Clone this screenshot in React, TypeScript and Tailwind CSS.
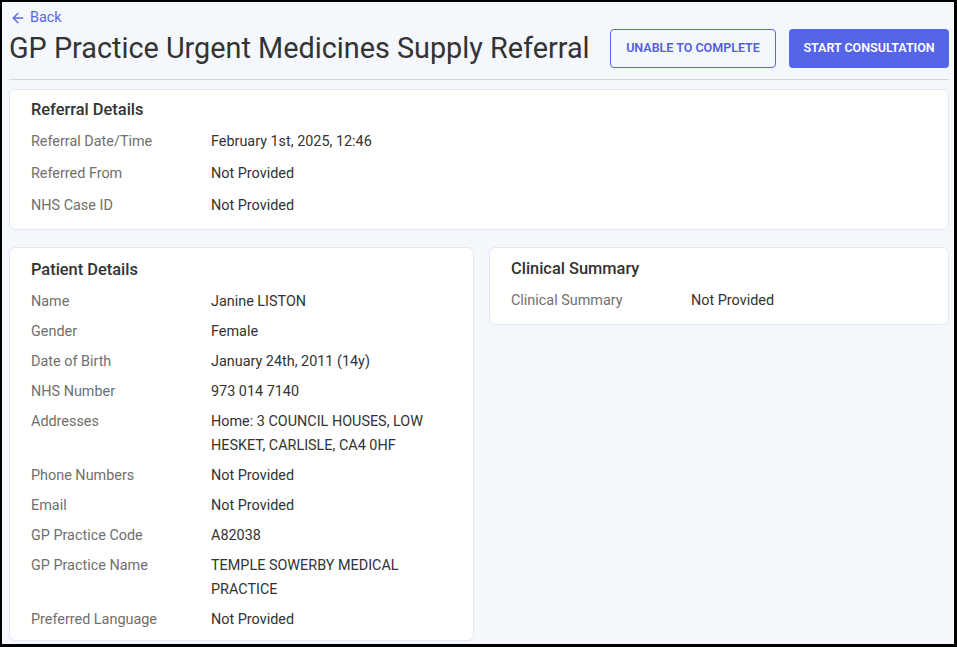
import { ArrowLeft } from "lucide-react";

type Row = { label: string; value: string };

const REFERRAL: Row[] = [
  { label: "Referral Date/Time", value: "February 1st, 2025, 12:46" },
  { label: "Referred From", value: "Not Provided" },
  { label: "NHS Case ID", value: "Not Provided" },
];

const PATIENT: Row[] = [
  { label: "Name", value: "Janine LISTON" },
  { label: "Gender", value: "Female" },
  { label: "Date of Birth", value: "January 24th, 2011 (14y)" },
  { label: "NHS Number", value: "973 014 7140" },
  { label: "Addresses", value: "Home: 3 COUNCIL HOUSES, LOW HESKET, CARLISLE, CA4 0HF" },
  { label: "Phone Numbers", value: "Not Provided" },
  { label: "Email", value: "Not Provided" },
  { label: "GP Practice Code", value: "A82038" },
  { label: "GP Practice Name", value: "TEMPLE SOWERBY MEDICAL PRACTICE" },
  { label: "Preferred Language", value: "Not Provided" },
];

function Card({ title, rows, gap, pad }: { title: string; rows: Row[]; gap: string; pad: string }) {
  return (
    <div className={`rounded-md border border-[#e3e8f0] bg-white px-[21px] ${pad}`}>
      <h2 className="text-[16.4px] leading-6 font-medium text-[#333333]">{title}</h2>
      <div className={`mt-2 flex flex-col ${gap}`}>
        {rows.map((r) => (
          <div key={r.label} className="flex text-[14.4px] leading-6">
            <div className="w-[180px] shrink-0 text-[#6f6f6f]">{r.label}</div>
            <div className="text-[#333333]">{r.value}</div>
          </div>
        ))}
      </div>
    </div>
  );
}

export default function App() {
  return (
    <div
      className="h-[647px] overflow-hidden border-l-2 border-t-2 border-r-[3px] border-b-[3px] border-black bg-[#f4f7fc] pl-[7px] pr-[5px]"
      style={{ fontFamily: "Roboto, 'Liberation Sans', sans-serif" }}
    >
      {/* ── Header ── */}
      <div className="flex items-end justify-between border-b border-[#d3d8e0] pb-[10px]">
        <div>
          <a className="mt-[8px] flex items-center gap-[4px] pl-[1px] text-[14.4px] leading-4 text-[#5a66e6]" href="#">
            <ArrowLeft className="h-[16px] w-[16px]" strokeWidth={2} />
            Back
          </a>
          <h1 className="mt-[4px] mb-[3px] text-[28.8px] leading-[36px] text-[#333333]">
            GP Practice Urgent Medicines Supply Referral
          </h1>
        </div>
        <div className="flex gap-[13px] pb-[1px]">
          <button className="h-[39px] w-[166px] rounded border border-[#5a66e6] text-[12.5px] font-semibold text-[#5060e0]">
            UNABLE TO COMPLETE
          </button>
          <button className="h-[39px] w-[160px] rounded bg-[#5465e8] text-[12.5px] font-semibold text-white">
            START CONSULTATION
          </button>
        </div>
      </div>

      {/* ── Body ── */}
      <div className="mt-[9px] flex flex-col gap-[17px]">
        <Card title="Referral Details" rows={REFERRAL} gap="gap-2" pad="pt-[8px] pb-[11px]" />
        <div className="grid grid-cols-[465px_1fr] items-start gap-[15px]">
          <Card title="Patient Details" rows={PATIENT} gap="gap-[6px]" pad="pt-[10px] pb-[8px]" />
          <Card
            title="Clinical Summary"
            rows={[{ label: "Clinical Summary", value: "Not Provided" }]}
            gap="gap-2"
            pad="pt-[9px] pb-[11px]"
          />
        </div>
      </div>
    </div>
  );
}
